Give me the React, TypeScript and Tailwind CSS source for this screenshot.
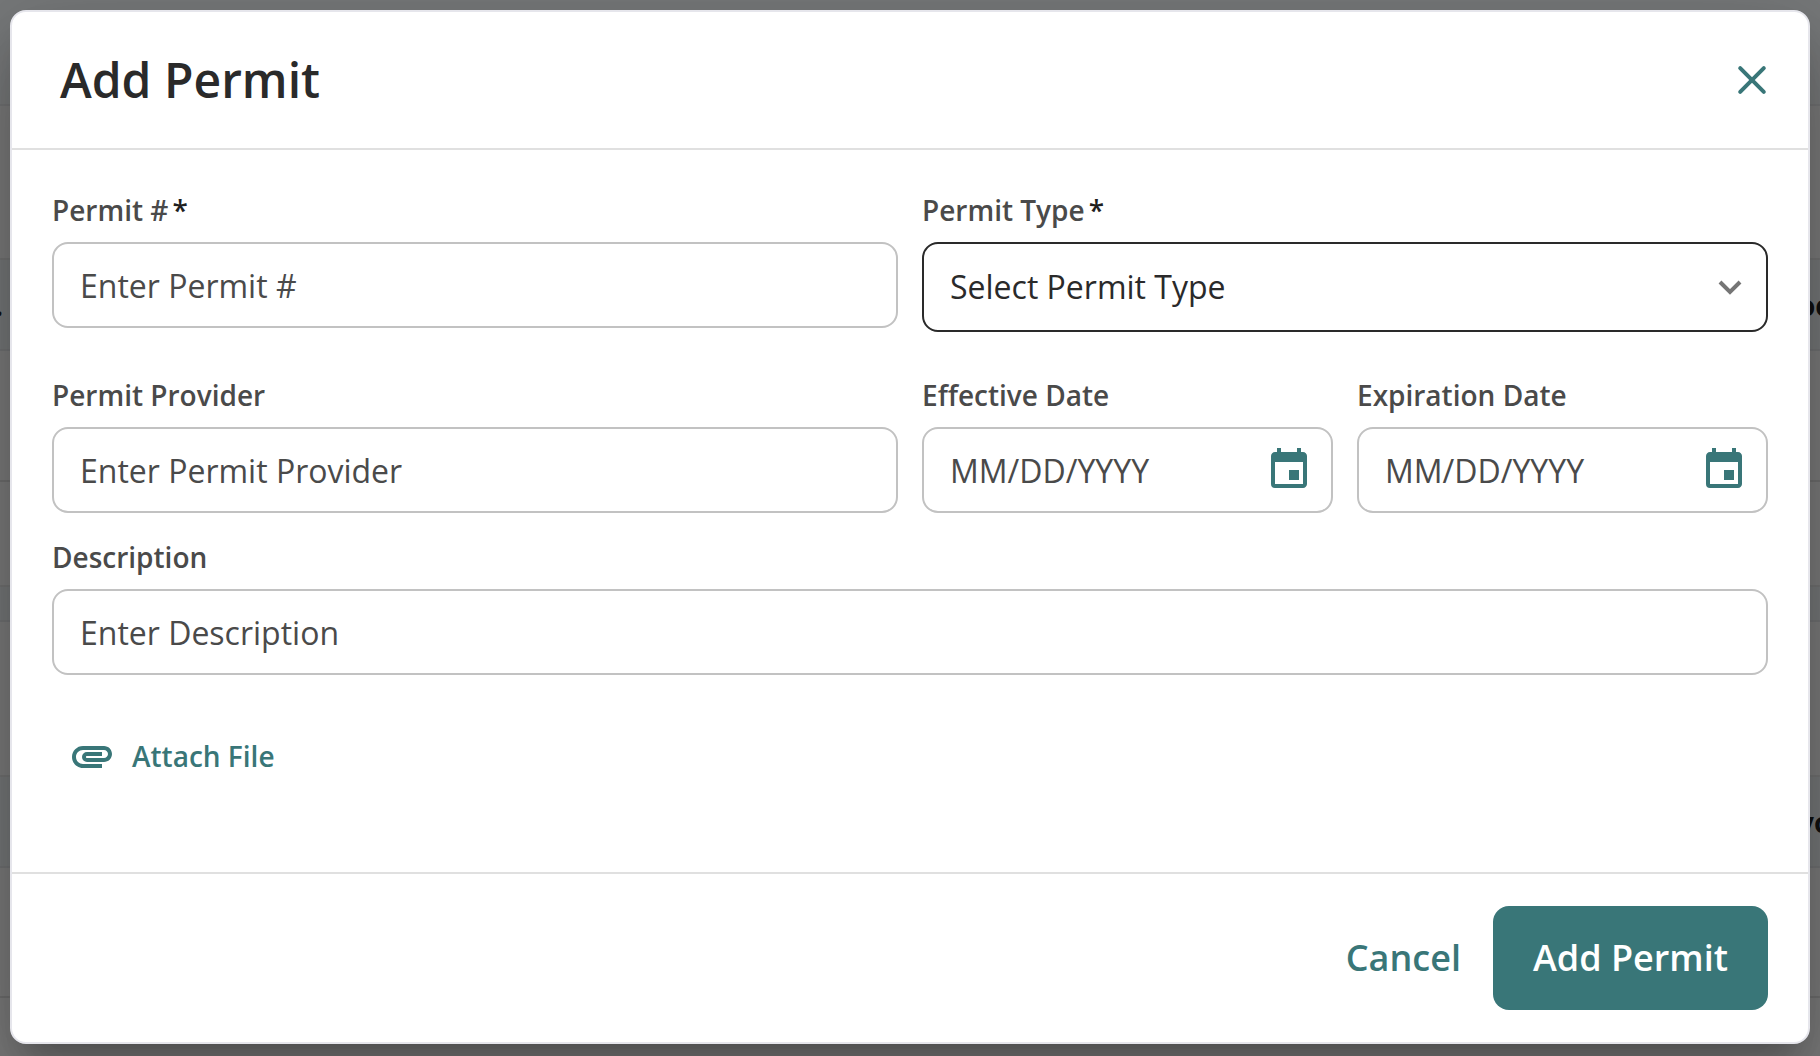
import type { InputHTMLAttributes, ReactNode } from 'react';
import { MdAttachment, MdEvent } from 'react-icons/md';

const inputClass =
  'h-[86px] w-full rounded-2xl border-2 border-[#c2c2c2] bg-white px-[26px] text-[32px] text-[#4a4a4a] outline-none placeholder:text-[#4a4a4a] placeholder:opacity-100';

// rows of the permits page that stay visible around the dialog
const pageRows = [
  { id: 'toolbar', className: 'h-[106px] border-[#e4e6e8] bg-[#eff2f5]', start: '', end: '' },
  { id: 'summary', className: 'h-[154px] border-[#e3e4e5] bg-[#f7f7f6]', start: '', end: '' },
  { id: 'permits-head', className: 'h-[91px] border-[#e0e3e6] bg-[#eaeef1]', start: '.', end: 'oc' },
  { id: 'permits-1', className: 'h-[131px] border-[#dcdcdc] bg-[#f7f7f6]', start: '', end: '' },
  { id: 'permits-2', className: 'h-[105px] border-[#e3e4e5] bg-[#f7f7f6]', start: '', end: '' },
  { id: 'divider', className: 'h-[35px] border-[#e0e3e6] bg-[#eaeef1]', start: '', end: '' },
  { id: 'notes', className: 'h-[155px] border-[#e3e4e5] bg-[#f7f7f6]', start: '', end: '' },
  { id: 'files-head', className: 'h-[91px] border-[#e0e3e6] bg-[#eaeef1]', start: '', end: 'vo' },
  { id: 'files-1', className: 'h-[130px] border-[#dcdcdc] bg-[#f7f7f6]', start: '', end: '' },
  { id: 'files-2', className: 'grow border-[#f7f7f6] bg-[#f7f7f6]', start: '', end: '' },
];

function PageBackdrop() {
  return (
    <div aria-hidden="true" className="absolute inset-0 flex flex-col overflow-hidden">
      {pageRows.map((row) => (
        <div
          key={row.id}
          className={`flex shrink-0 items-center justify-between border-b-2 text-[28px] font-bold text-[#222] ${row.className}`}
        >
          <span className="-ml-[5px]">{row.start}</span>
          <span className="w-[22px] whitespace-nowrap">{row.end}</span>
        </div>
      ))}
      <div className="absolute inset-0 bg-black/50" />
    </div>
  );
}

function Field({ id, label, required, children }: { id: string; label: string; required?: boolean; children: ReactNode }) {
  return (
    <div className="flex min-w-0 flex-1 flex-col">
      <label htmlFor={id} className="mb-3.5 text-[28px] leading-9 font-semibold text-[#4a4a4a]">
        {label}
        {required && <span className="ml-1 text-[#1f1f1f]">*</span>}
      </label>
      {children}
    </div>
  );
}

function TextField({ id, label, required, ...rest }: { id: string; label: string } & InputHTMLAttributes<HTMLInputElement>) {
  return (
    <Field id={id} label={label} required={required}>
      <input id={id} type="text" required={required} className={inputClass} {...rest} />
    </Field>
  );
}

function DateField({ id, label }: { id: string; label: string }) {
  return (
    <Field id={id} label={label}>
      <div className="relative">
        <input id={id} type="text" placeholder="MM/DD/YYYY" className={inputClass} />
        <button
          type="button"
          aria-label={`Choose ${label}`}
          className="absolute inset-y-0 right-5 flex items-center text-[#397678]"
        >
          <MdEvent className="size-12" />
        </button>
      </div>
    </Field>
  );
}

export default function App() {
  return (
    <div className="relative flex min-h-screen flex-col overflow-hidden px-[10px] pt-[10px] pb-3 font-['Open_Sans','Noto_Sans',sans-serif]">
      <PageBackdrop />
      <div
        role="dialog"
        aria-labelledby="dialog-title"
        className="relative flex grow flex-col rounded-2xl border-2 border-[#e6e6ec] bg-white shadow-[0_22px_30px_-14px_rgba(0,0,0,0.2),0_48px_76px_6px_rgba(0,0,0,0.14),0_18px_92px_16px_rgba(0,0,0,0.12)]"
      >
        <header className="flex h-[138px] items-center justify-between border-b-2 border-[#e0e0e0] pr-8 pl-12">
          <h1 id="dialog-title" className="text-[48px] leading-[64px] font-semibold text-[#2a2a2a]">
            Add Permit
          </h1>
          <button type="button" aria-label="Close" className="text-[#397678]">
            <svg viewBox="0 0 48 48" className="size-12 fill-none stroke-current stroke-4" strokeLinecap="round">
              <path d="M12.2 12.2l23.6 23.6M35.8 12.2L12.2 35.8" />
            </svg>
          </button>
        </header>

        <form id="permit-form" className="flex grow flex-col px-10 pt-[42px]">
          <div className="flex gap-6">
            <TextField id="permit-number" label="Permit #" placeholder="Enter Permit #" required />
            <Field id="permit-type" label="Permit Type" required>
              <div className="relative">
                <select
                  id="permit-type"
                  className="h-[90px] w-full appearance-none rounded-2xl border-2 border-[#2a2a2a] bg-white px-[26px] text-[32px] text-[#2a2a2a] outline-none"
                >
                  <option>Select Permit Type</option>
                </select>
                <svg
                  viewBox="0 0 24 15"
                  className="pointer-events-none absolute top-[38px] right-[26px] h-[15px] w-6 fill-none stroke-[#757575] stroke-4"
                >
                  <path d="M2 2l10 10L22 2" />
                </svg>
              </div>
            </Field>
          </div>

          <div className="mt-[45px] flex gap-6">
            <TextField id="permit-provider" label="Permit Provider" placeholder="Enter Permit Provider" />
            <div className="flex min-w-0 flex-1 gap-6">
              <DateField id="effective-date" label="Effective Date" />
              <DateField id="expiration-date" label="Expiration Date" />
            </div>
          </div>

          <div className="mt-[26px] flex">
            <TextField id="description" label="Description" placeholder="Enter Description" />
          </div>

          <button
            type="button"
            className="mt-[57px] ml-4 flex items-center gap-4 self-start text-[28px] leading-9 font-semibold text-[#397678]"
          >
            <MdAttachment className="size-12" />
            Attach File
          </button>
        </form>

        <footer className="flex items-center justify-end gap-8 border-t-2 border-[#e0e0e0] px-10 py-8">
          <button type="button" className="text-4xl font-semibold text-[#397678]">
            Cancel
          </button>
          <button
            type="submit"
            form="permit-form"
            className="h-[104px] rounded-2xl bg-[#397678] px-10 text-4xl font-semibold text-white"
          >
            Add Permit
          </button>
        </footer>
      </div>
    </div>
  );
}
